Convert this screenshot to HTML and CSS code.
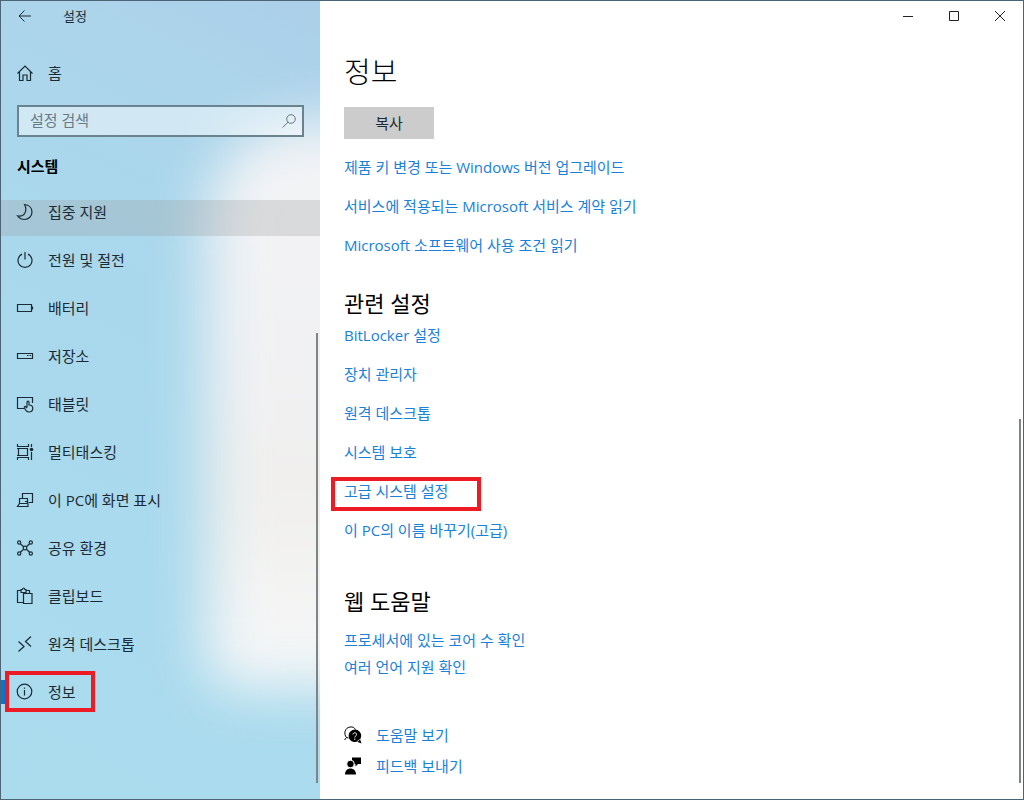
FILE: index.html
```html
<!DOCTYPE html>
<html lang="ko">
<head>
    <meta charset="utf-8">
    <title>설정</title>
    <link rel="stylesheet" href="styles.css">
</head>
<body>
    <div class="window">
        <aside class="sidebar">
            <header class="titlebar">
                <button type="button" class="back" aria-label="뒤로">
                    <svg width="14" height="14" viewBox="0 0 14 14"><path d="M13 7H1.500M6.500 1.500L1 7l5.500 5.500"/></svg>
                </button>
                <span>설정</span>
            </header>

            <a class="item home" href="#">
                <svg width="18" height="18" viewBox="0 0 18 18"><path d="M1.500 9.500L9 2l7.500 7.500M3.500 8v8.500H7v-5.500h4v5.500h3.500V8"/></svg>
                <span>홈</span>
            </a>

            <form class="search">
                <input type="text" id="search" placeholder="설정 검색" aria-label="설정 검색">
                <svg width="16" height="16" viewBox="0 0 16 16"><circle cx="10" cy="6" r="4.300"/><path d="M7 9.200L1.500 14.500"/></svg>
            </form>

            <h2 class="group">시스템</h2>

            <nav class="nav">
                <ul>
                    <li><a class="item hover" href="#">
                        <svg width="18" height="18" viewBox="0 0 18 18"><path d="M8.500 1.500c4.500.5 7.500 3.500 7.500 7.500s-3.300 7.500-7.500 7.500c-3 0-5.500-1.300-7-3.700 3.500.7 6-.3 7.300-2.600 1.500-2.800 1.300-5.800-.3-8.700z"/></svg>
                        <span>집중 지원</span>
                    </a></li>
                    <li><a class="item" href="#">
                        <svg width="18" height="18" viewBox="0 0 18 18"><path d="M9 1v7.500M6 3.100a7 7 0 1 0 6 0"/></svg>
                        <span>전원 및 절전</span>
                    </a></li>
                    <li><a class="item" href="#">
                        <svg width="18" height="18" viewBox="0 0 18 18"><path d="M1.500 5.500h14v7h-14zM16.500 7.500v3"/></svg>
                        <span>배터리</span>
                    </a></li>
                    <li><a class="item" href="#">
                        <svg width="18" height="18" viewBox="0 0 18 18"><path d="M1.500 6.500h15v5h-15zM11 8.500h1.500M13.500 8.500H15"/></svg>
                        <span>저장소</span>
                    </a></li>
                    <li><a class="item" href="#">
                        <svg width="18" height="18" viewBox="0 0 18 18"><path d="M8 13.500H1.500v-11h15V8M5 13.500h3M11 12.500V7.200c0-1.500 2-1.500 2 0V10c2.500.2 3.800 1 3.800 3 0 2.500-1.300 4-3.800 4s-3.300-1.200-4.600-4.200c-.4-1.200.6-1.800 1.600-.8l1 1"/></svg>
                        <span>태블릿</span>
                    </a></li>
                    <li><a class="item" href="#">
                        <svg width="18" height="18" viewBox="0 0 18 18"><path d="M2.500 5.500h9v7h-9zM1.500 1v2.500h11V1M1.500 17v-2.500h11V17M15.500 1v3M15.500 9v8M1 5.500h2M1 12.500h2"/><circle class="solid" cx="15.500" cy="6.500" r="1.800"/></svg>
                        <span>멀티태스킹</span>
                    </a></li>
                    <li><a class="item" href="#">
                        <svg width="18" height="18" viewBox="0 0 18 18"><path d="M6.500 7V2.500h10v9h-4M3.500 7.500h8v5h-8zM3.500 12.500l-2 3h10.500v-3M9 10.500h2"/></svg>
                        <span>이 PC에 화면 표시</span>
                    </a></li>
                    <li><a class="item" href="#">
                        <svg width="18" height="18" viewBox="0 0 18 18"><circle cx="3.200" cy="3.500" r="1.600"/><circle cx="14.800" cy="3.500" r="1.600"/><circle cx="3.200" cy="14.500" r="1.600"/><circle cx="14.800" cy="14.500" r="1.600"/><circle cx="9" cy="9" r="1.800"/><path d="M4.400 4.700l3.200 3M13.600 4.700l-3.200 3M4.400 13.300l3.200-3M13.600 13.300l-3.200-3"/></svg>
                        <span>공유 환경</span>
                    </a></li>
                    <li><a class="item" href="#">
                        <svg width="18" height="18" viewBox="0 0 18 18"><path d="M7.500 15.500h-6v-12H5M10 3.500h3.500V6M5 5.500v-3h1.500c.3-2 2-2 2.300 0H10v3zM7.500 6.500h8.500v10H7.500z"/></svg>
                        <span>클립보드</span>
                    </a></li>
                    <li><a class="item" href="#">
                        <svg width="18" height="18" viewBox="0 0 18 18"><path d="M2.500 6.500L8 11.500l-5.500 5M15 1.500L9.500 6.500l5.500 5"/></svg>
                        <span>원격 데스크톱</span>
                    </a></li>
                    <li><a class="item current" href="#">
                        <svg width="18" height="18" viewBox="0 0 18 18"><circle cx="8.500" cy="8.500" r="7.300"/><path d="M8.500 7V12.500M8.500 4.500v1.300"/></svg>
                        <span>정보</span>
                    </a></li>
                </ul>
            </nav>
            <div class="scrollbar side-scroll"></div>
        </aside>

        <main class="content">
            <div class="controls">
                <button type="button" aria-label="최소화"><svg width="12" height="12" viewBox="0 0 12 12"><path d="M1 6.500h10"/></svg></button>
                <button type="button" aria-label="최대화"><svg width="12" height="12" viewBox="0 0 12 12"><path d="M1.500 1.500h9v9h-9z"/></svg></button>
                <button type="button" aria-label="닫기"><svg width="12" height="12" viewBox="0 0 12 12"><path d="M1 1l10 10M11 1L1 11"/></svg></button>
            </div>

            <h1>정보</h1>
            <button type="button" class="copy">복사</button>
            <ul class="links">
                <li><a href="#">제품 키 변경 또는 Windows 버전 업그레이드</a></li>
                <li><a href="#">서비스에 적용되는 Microsoft 서비스 계약 읽기</a></li>
                <li><a href="#">Microsoft 소프트웨어 사용 조건 읽기</a></li>
            </ul>

            <h2>관련 설정</h2>
            <ul class="links">
                <li><a href="#">BitLocker 설정</a></li>
                <li><a href="#">장치 관리자</a></li>
                <li><a href="#">원격 데스크톱</a></li>
                <li><a href="#">시스템 보호</a></li>
                <li><a class="marked" href="#">고급 시스템 설정</a></li>
                <li><a href="#">이 PC의 이름 바꾸기(고급)</a></li>
            </ul>

            <h2 class="web-help">웹 도움말</h2>
            <ul class="links tight">
                <li><a href="#">프로세서에 있는 코어 수 확인</a></li>
                <li><a href="#">여러 언어 지원 확인</a></li>
            </ul>

            <ul class="support">
                <li><a href="#">
                    <svg width="18" height="18" viewBox="0 0 18 18"><path class="line" d="M2.500 11.500C-.5 8 .5 2 6 1c3-.4 4.500.8 5.500 2.500M.5 14l2-2.500 2 .5"/><path d="M10.800 3.500a6.300 6.300 0 1 1-1 12.500A6.300 6.300 0 0 1 10.800 3.500zM12.500 15.500l5 2-1.500-4.500z"/><path class="cut" d="M9 8.500c0-2.300 3.600-2.300 3.600 0 0 1.500-1.800 1.300-1.800 3M10.800 12.500v1.300"/></svg>
                    <span>도움말 보기</span>
                </a></li>
                <li><a href="#">
                    <svg width="18" height="18" viewBox="0 0 18 18"><path d="M8 .5h9v6.500h-3L11.500 9.500V7H8z"/><circle class="edge" cx="6.500" cy="7" r="3.800"/><path d="M1 17.500c0-8 11-8 11 0z"/></svg>
                    <span>피드백 보내기</span>
                </a></li>
            </ul>
            <div class="scrollbar main-scroll"></div>
        </main>
    </div>
</body>
</html>
```
FILE: styles.css
```css
*, *::before, *::after {
    box-sizing: border-box;
}
body {
    margin: 0;
    font-family: "Open Sans", "Noto Sans CJK KR", sans-serif;
    font-size: 15px;
    line-height: 20px;
    color: #1c2b33;
}
h1, h2, ul {
    margin: 0;
    padding: 0;
    font-weight: 400;
}
ul {
    list-style: none;
}
a {
    color: inherit;
    text-decoration: none;
}
button {
    padding: 0;
    border: none;
    background: none;
    font: inherit;
    color: inherit;
}
svg {
    display: block;
    flex: none;
    fill: none;
    stroke: currentColor;
}
.window {
    display: flex;
    min-height: 100vh;
    border: 1px solid #4c6475;
    background: #fff;
}

/* sidebar */
.sidebar {
    position: relative;
    z-index: 0;
    flex: 0 0 319px;
    display: flex;
    flex-direction: column;
    overflow: hidden;
    background: linear-gradient(205deg, #accfea 0%, #acd5eb 15%, #a9d8ed 40%, #abdcee 100%);
}
.sidebar::before {
    content: "";
    position: absolute;
    z-index: -1;
    top: 120px;
    left: 205px;
    width: 260px;
    height: 568px;
    border-radius: 100px 0 0 30px;
    background: linear-gradient(#f3f4f6, #f1f1f3 45%, #f0efed 65%, #f7f8f9);
    filter: blur(28px);
}
.titlebar {
    display: flex;
    align-items: center;
    gap: 31px;
    height: 30px;
    padding-left: 17px;
    font-size: 13px;
}
.item {
    position: relative;
    display: flex;
    align-items: center;
    gap: 14px;
    height: 48px;
    padding-left: 15px;
}
.item svg {
    stroke-width: 1.2;
}
.home {
    margin-top: 18px;
}
.search {
    position: relative;
    margin: 8px 16px 0;
}
.search input {
    display: block;
    width: 100%;
    height: 32px;
    padding: 0 34px 2px 11px;
    border: 2px solid #6b838f;
    border-radius: 0;
    background: rgba(255, 255, 255, 0.45);
    font: inherit;
    color: #1c2b33;
}
.search input::placeholder {
    color: #6a7a83;
    opacity: 1;
}
.search svg {
    position: absolute;
    top: 8px;
    right: 7px;
    color: #687880;
}
.group {
    margin: 19px 16px 0;
    font-size: 15px;
    font-weight: 700;
    color: #000;
}
.nav {
    margin-top: 24px;
    overflow: hidden;
}
/* list is scrolled down a little, first row is cut */
.nav ul {
    margin-top: -12px;
}
.hover {
    background: rgba(150, 150, 150, 0.27);
}
.current::before {
    content: "";
    position: absolute;
    top: 12px;
    left: 0;
    width: 5px;
    height: 24px;
    background: #0078d7;
}
.current::after {
    content: "";
    position: absolute;
    top: 3px;
    left: 4px;
    width: 90px;
    height: 41px;
    border: 4px solid #ed1c24;
}
.scrollbar {
    position: absolute;
    bottom: 16px;
    width: 2px;
    background: #808486;
}
.side-scroll {
    top: 332px;
    right: 2px;
}

/* content */
.content {
    position: relative;
    flex: 1;
    padding: 0 24px 22px;
}
.main-scroll {
    top: 418px;
    right: 2px;
}
.controls {
    display: flex;
    justify-content: flex-end;
    gap: 34px;
    height: 30px;
    margin-right: -7px;
}
.controls button {
    color: #222;
}
h1 {
    margin-top: 21px;
    font-size: 29px;
    font-weight: 300;
    line-height: 40px;
    color: #000;
}
.copy {
    display: block;
    width: 90px;
    height: 32px;
    margin: 15px 0 18px;
    background: #ccc;
}
.content h2 {
    margin: 33px 0 7px;
    font-size: 22px;
    line-height: 30px;
    color: #000;
}
.content .web-help {
    margin-top: 46px;
}
.links {
    display: flex;
    flex-direction: column;
    align-items: flex-start;
    gap: 19px;
    color: #1a81d9;
}
.tight {
    gap: 7px;
    padding-top: 7px;
}
.marked {
    position: relative;
}
.marked::after {
    content: "";
    position: absolute;
    top: -4px;
    left: -13px;
    width: 150px;
    height: 34px;
    border: 4px solid #ed1c24;
}
.support {
    display: flex;
    flex-direction: column;
    gap: 11px;
    margin-top: 48px;
    color: #1a81d9;
}
.support a {
    display: flex;
    align-items: center;
    gap: 14px;
}
.support svg {
    fill: #000;
    stroke: none;
}
.support .line {
    fill: none;
    stroke: #000;
}
.support .cut {
    fill: none;
    stroke: #fff;
}
.support .edge {
    stroke: #fff;
}
.solid {
    fill: currentColor;
    stroke: none;
}
```
